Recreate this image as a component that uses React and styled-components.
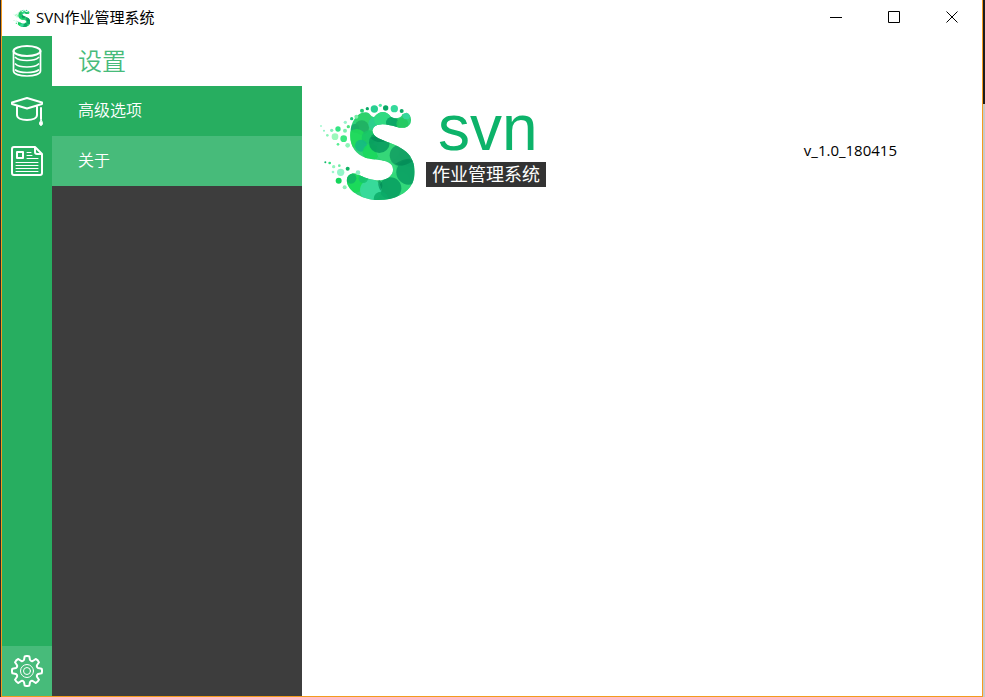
import React, { useId } from 'react';
import styled, { createGlobalStyle } from 'styled-components';

const GlobalStyle = createGlobalStyle`
  *, *::before, *::after { box-sizing: border-box; }
  html, body, #root { height: 100%; }
  body {
    margin: 0;
    font-family: "Open Sans", "Noto Sans CJK SC", sans-serif;
    font-size: 15px;
    color: #000;
    overflow: hidden;
  }
  button {
    border: 0;
    padding: 0;
    margin: 0;
    background: none;
    font: inherit;
    color: inherit;
    cursor: pointer;
  }
`;

const Desktop = styled.div`
  height: 100vh;
  padding: 0 2px 0 1px;
  background:
    linear-gradient(#1b1c1e 0 104px, #c9c9c9 104px) right / 2px 100% no-repeat,
    #2b2b2b;
`;

const Window = styled.div`
  height: 100%;
  display: flex;
  flex-direction: column;
  background: #fff;
  border: 1px solid #f39a1e;
  border-top: 0;
`;

const TitleBar = styled.header`
  flex: none;
  display: flex;
  align-items: center;
  height: 36px;
  padding: 0 1px 0 10px;
`;

const AppName = styled.span`
  flex: 1;
  padding-left: 4px;
  line-height: 20px;
  padding-bottom: 2px;
`;

const WindowButton = styled.button`
  display: grid;
  place-items: center;
  width: 58px;
  height: 34px;
  align-self: flex-start;
`;

const Body = styled.div`
  flex: 1;
  min-height: 0;
  display: flex;
`;

const Rail = styled.nav`
  flex: none;
  width: 50px;
  display: flex;
  flex-direction: column;
  background: #27ae60;
`;

const RailButton = styled.button`
  display: grid;
  place-items: center;
  height: 50px;
  background: ${(p) => (p.$active ? '#47bb7a' : 'transparent')};
  margin-top: ${(p) => (p.$bottom ? 'auto' : '0')};
`;

const SidePanel = styled.aside`
  flex: none;
  width: 250px;
  display: flex;
  flex-direction: column;
  background: #3d3d3d;
`;

const PanelTitle = styled.h1`
  margin: 0;
  height: 50px;
  padding-left: 26px;
  background: #fff;
  color: #47bb7a;
  font-size: 24px;
  font-weight: 350;
  line-height: 50px;
`;

const MenuItem = styled.button`
  height: 50px;
  padding: 0 26px 4px;
  background: ${(p) => (p.$active ? '#47bb7a' : '#27ae60')};
  color: #fff;
  font-size: 16px;
  font-weight: 350;
  text-align: left;
`;

const Content = styled.main`
  flex: 1;
  display: flex;
  align-items: flex-start;
  justify-content: space-between;
  padding: 59px 85px 0 13px;
`;

const Brand = styled.div`
  display: flex;
`;

const Wordmark = styled.div`
  display: flex;
  flex-direction: column;
  align-items: flex-start;
`;

const BrandName = styled.span`
  padding-left: 13px;
  color: #0db36a;
  font-family: "Liberation Sans", Arial, sans-serif;
  font-size: 64px;
  line-height: 67px;
`;

const BrandCaption = styled.span`
  margin-left: 1px;
  padding: 0 6px;
  background: #333;
  color: #fff;
  font-size: 18px;
  line-height: 25px;
`;

const Version = styled.span`
  padding-top: 45px;
  line-height: 20px;
`;

const LineIcon = styled.svg`
  display: block;
  fill: none;
  stroke: ${(p) => p.$color || '#fff'};
  stroke-width: ${(p) => p.$weight || 2};
  stroke-linecap: round;
  stroke-linejoin: round;
`;

const blobs = [
  [145, 75, 23, '#2fd269'], [120, 100, 13, '#16a96b'], [140, 98, 22, '#1fae63'],
  [125, 130, 28, '#20dc59'], [162, 128, 22, '#18c766'], [138, 152, 18, '#14b884'],
  [180, 86, 20, '#2bcf91'], [203, 73, 26, '#2fdc83'], [232, 84, 19, '#06a062'],
  [262, 86, 18, '#25c95f'], [274, 62, 11, '#36d8a0'], [168, 172, 25, '#19d95a'],
  [218, 166, 34, '#36d878'], [193, 143, 31, '#079a5e'], [290, 180, 36, '#2cb877'],
  [256, 181, 32, '#129e62'], [225, 225, 20, '#3add80'], [252, 265, 34, '#32d97a'],
  [281, 232, 37, '#089d61'], [226, 280, 33, '#079e60'], [119, 262, 31, '#18dc55'],
  [167, 285, 32, '#38dca0'], [108, 250, 16, '#0fb366'], [145, 250, 14, '#16c370'],
  [198, 312, 22, '#0cab69'],
];

const droplets = [
  [18, 93, 3, '#a3f7cf'], [27, 107, 3, '#8bf3c2'], [37, 121, 4, '#8df5b9'],
  [50, 106, 5, '#81efbb'], [69, 102, 8, '#35e483'], [60, 125, 10, '#9bf8bb'],
  [86, 131, 10, '#3be77f'], [90, 107, 6, '#7cf1af'], [91, 82, 5, '#98f3cb'],
  [100, 95, 5, '#4fe37f'], [110, 71, 5, '#1ec979'], [69, 148, 4, '#58ed94'],
  [98, 151, 7, '#8cf6b8'], [124, 65, 6, '#76efa4'], [141, 47, 6, '#20d072'],
  [157, 41, 5, '#09a866'], [178, 42, 11, '#28cf91'], [196, 31, 5, '#56e8a5'],
  [212, 39, 8, '#07a665'], [238, 41, 11, '#35d99b'], [260, 48, 6, '#08a763'],
  [31, 202, 3, '#12b66b'], [44, 204, 4, '#2ce179'], [56, 215, 5, '#92f5bd'],
  [73, 212, 4, '#69eda1'], [54, 231, 4, '#9bf7cd'], [77, 232, 11, '#93f5c8'],
  [98, 221, 6, '#10b363'], [71, 257, 9, '#15d65b'], [129, 233, 7, '#8cefc4'],
  [89, 277, 6, '#8eefb7'],
];

function SvnLogo({ size }) {
  const clip = useId();
  return (
    <svg width={size} height={size} viewBox="0 0 330 330" aria-hidden="true">
      <clipPath id={clip}>
        <path d="M274 53C287 57 290 70 287 83C282 98 263 101 247 97C226 90 204 85 187 90C171 95 168 112 181 124C202 140 247 147 274 171C299 193 305 232 293 263C278 296 238 315 190 315C145 314 99 292 95 257C96 238 114 231 130 239C150 248 176 258 201 255C224 251 240 235 232 213C221 192 180 196 151 188C122 179 103 151 106 115C107 82 124 53 153 52C166 53 169 69 178 65C194 45 215 47 228 65C243 74 260 69 262 58Z" />
      </clipPath>
      <g clipPath={`url(#${clip})`}>
        <rect width="330" height="330" fill="#30d277" />
        {blobs.map(([x, y, r, c], i) => (
          <circle key={i} cx={x} cy={y} r={r} fill={c} opacity=".85" />
        ))}
        <path d="M240 207Q270 220 299 193Q270 187 240 207M192 253Q209 268 197 287Q185 270 192 253M166 128Q184 148 218 138Q190 120 166 128" fill="#008653" opacity=".6" />
      </g>
      {droplets.map(([x, y, r, c], i) => (
        <circle key={i} cx={x} cy={y} r={r} fill={c} />
      ))}
    </svg>
  );
}

const DatabaseIcon = () => (
  <LineIcon width="32" height="32" viewBox="0 0 32 32">
    <ellipse cx="16" cy="6" rx="13.5" ry="5" />
    <path d="M2.5 6V26C2.5 29 8.5 31 16 31S29.500 29 29.500 26V6M4.500 12.500C7 15 12 15.500 16 15.500S25 15 27.500 12.500M4.500 19C7 21.500 12 22 16 22S25 21.500 27.500 19M4.500 25C7 27 12 27.500 16 27.500S25 27 27.500 25" strokeWidth="1.7" />
  </LineIcon>
);

const GraduationIcon = () => (
  <LineIcon width="32" height="32" viewBox="0 0 32 32">
    <path d="M1 7.500L16 3L31 7.500V9L16 13.500L1 9ZM6 11V20C6 23 10 25 16 25S26 23 26 20V11M30 13V24" />
    <path d="M30 25L28.500 28Q28.500 30.500 30 30.500T31.500 28Z" fill="#fff" strokeWidth="1" />
  </LineIcon>
);

const ArticleIcon = () => (
  <LineIcon width="32" height="32" viewBox="0 0 32 32">
    <path d="M3 2H24L31 9V28Q31 30 29 30H3Q1 30 1 28V4Q1 2 3 2ZM24 2V7Q24 9 26 9H31" />
    <path d="M6 7H12V13H6Z" />
    <path d="M16 7.500H20M16 10.500H21M16 13.500H27M5 17.500H27M5 20.500H27M5 23.500H27M5 26.500H27" strokeWidth="1" />
  </LineIcon>
);

const gearPath = (() => {
  const point = (r, deg) => {
    const a = (deg * Math.PI) / 180;
    return `${(16 + r * Math.cos(a)).toFixed(2)} ${(16 + r * Math.sin(a)).toFixed(2)}`;
  };
  let d = '';
  for (let i = 0; i < 8; i += 1) {
    const a = i * 45;
    d += `${i ? 'L' : 'M'}${point(11.5, a - 15)}L${point(14.8, a - 9)}Q${point(15.5, a)} ${point(14.8, a + 9)}L${point(11.5, a + 15)}Q${point(10.2, a + 22.5)} ${point(11.5, a + 30)}`;
  }
  return `${d}Z`;
})();

const GearIcon = () => (
  <LineIcon width="32" height="32" viewBox="0 0 32 32">
    <path d={gearPath} />
    <circle cx="16" cy="16" r="6.500" strokeWidth="1" />
    <circle cx="16" cy="16" r="3.500" strokeWidth="1" />
  </LineIcon>
);

const controls = [
  ['最小化', 'M0 6.500H12'],
  ['最大化', 'M.5 .5H11.500V11.500H.5Z'],
  ['关闭', 'M.5 .5L11.500 11.500M11.500 .5L.5 11.500'],
];

export default function App() {
  return (
    <>
      <GlobalStyle />
      <Desktop>
        <Window>
          <TitleBar>
            <SvnLogo size={20} />
            <AppName>SVN作业管理系统</AppName>
            {controls.map(([label, d]) => (
              <WindowButton key={label} aria-label={label}>
                <LineIcon width="12" height="12" viewBox="0 0 12 12" $color="#000" $weight={1}>
                  <path d={d} strokeLinecap="butt" strokeLinejoin="miter" />
                </LineIcon>
              </WindowButton>
            ))}
          </TitleBar>
          <Body>
            <Rail>
              <RailButton aria-label="数据库"><DatabaseIcon /></RailButton>
              <RailButton aria-label="课程"><GraduationIcon /></RailButton>
              <RailButton aria-label="作业"><ArticleIcon /></RailButton>
              <RailButton aria-label="设置" $active $bottom><GearIcon /></RailButton>
            </Rail>
            <SidePanel>
              <PanelTitle>设置</PanelTitle>
              <MenuItem>高级选项</MenuItem>
              <MenuItem $active>关于</MenuItem>
            </SidePanel>
            <Content>
              <Brand>
                <SvnLogo size={110} />
                <Wordmark>
                  <BrandName>svn</BrandName>
                  <BrandCaption>作业管理系统</BrandCaption>
                </Wordmark>
              </Brand>
              <Version>v_1.0_180415</Version>
            </Content>
          </Body>
        </Window>
      </Desktop>
    </>
  );
}
